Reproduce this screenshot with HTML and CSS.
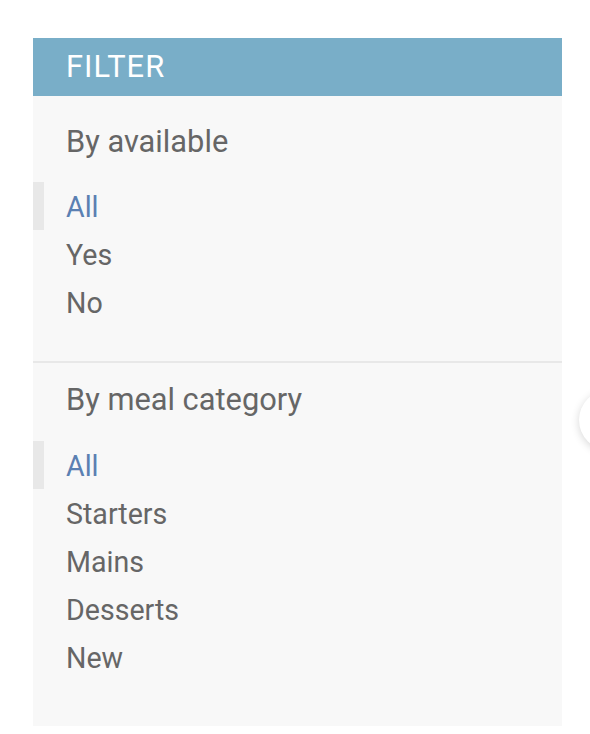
FILE: index.html
```html
<!DOCTYPE html>
<html>
<head>
<meta charset="utf-8">
<link rel="stylesheet" href="styles.css">
</head>
<body>
<div class="filter">
  <h2 class="filter-title">Filter</h2>
  <section class="group">
    <h3 class="group-title">By available</h3>
    <ul class="options">
      <li class="selected"><a href="#">All</a></li>
      <li><a href="#">Yes</a></li>
      <li><a href="#">No</a></li>
    </ul>
  </section>
  <section class="group group-last">
    <h3 class="group-title">By meal category</h3>
    <ul class="options">
      <li class="selected"><a href="#">All</a></li>
      <li><a href="#">Starters</a></li>
      <li><a href="#">Mains</a></li>
      <li><a href="#">Desserts</a></li>
      <li><a href="#">New</a></li>
    </ul>
  </section>
</div>
<div class="float-btn"></div>
</body>
</html>
```
FILE: styles.css
```css
html, body {
  margin: 0;
  padding: 0;
  background: #ffffff;
  overflow: hidden;
}
body {
  width: 590px;
  height: 734px;
  position: relative;
  font-family: Roboto, "Liberation Sans", sans-serif;
}
.filter {
  margin: 38px 0 0 33px;
  width: 529px;
  height: 688px;
  background: #f8f8f8;
}
.filter-title {
  margin: 0;
  height: 58px;
  box-sizing: border-box;
  padding: 13px 0 0 33px;
  background: #79aec8;
  color: #ffffff;
  font-size: 30.8px;
  letter-spacing: 1.1px;
  font-weight: 400;
  line-height: 32px;
  text-transform: uppercase;
}
.group {
  padding: 26px 0 35px 0;
  border-bottom: 2px solid #e8e8e8;
}
.group-last {
  padding-top: 17px;
  border-bottom: none;
}
.group-title {
  margin: 0 0 20px 0;
  padding-left: 33px;
  height: 40px;
  font-size: 30.8px;
  line-height: 40px;
  font-weight: 400;
  color: #666666;
}
.group-last .group-title {
  margin-bottom: 21px;
}
.options {
  list-style: none;
  margin: 0;
  padding: 0;
}
.options li {
  height: 48px;
  box-sizing: border-box;
  padding-top: 3px;
  line-height: 45px;
  font-size: 28.6px;
  padding-left: 33px;
}
.options a {
  color: #666666;
  text-decoration: none;
}
.options li.selected {
  border-left: 11px solid #e8e8e8;
  padding-left: 22px;
}
.options li.selected a {
  color: #5b80b2;
}
.float-btn {
  position: absolute;
  left: 579px;
  top: 390px;
  width: 60px;
  height: 60px;
  border-radius: 50%;
  background: #ffffff;
  box-shadow: 0 2px 8px rgba(0, 0, 0, 0.16);
}
```
